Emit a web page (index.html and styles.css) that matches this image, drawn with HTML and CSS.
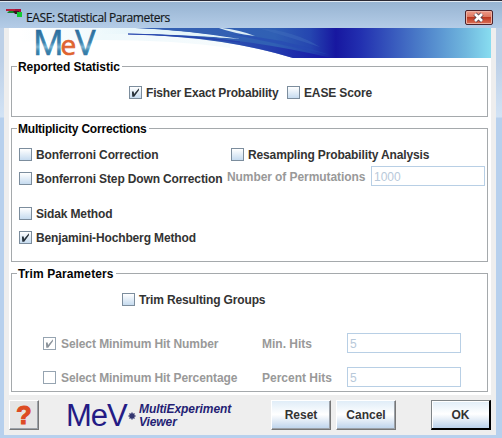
FILE: index.html
```html
<!DOCTYPE html>
<html lang="en">
<head>
<meta charset="utf-8">
<title>EASE: Statistical Parameters</title>
<link rel="stylesheet" href="styles.css">
</head>
<body>
<div class="window">
  <header class="titlebar">
    <svg class="app-icon" width="17" height="9" viewBox="0 0 17 9"><path d="M0 1h9v2H0z" fill="#b5203c"/><path d="M3 3h8v2H1z" fill="#16852c"/><path d="M9 1h6v3H9z" fill="#a3123c"/><path d="M7 3h6v3H9z" fill="#351a20"/><path d="M11 4h5v5h-5z" fill="#15c934"/></svg>
    <h1 class="title">EASE: Statistical Parameters</h1>
    <button class="close" aria-label="Close"><svg width="28" height="15" viewBox="0 0 28 15"><path d="M10 4l7 7M17 4l-7 7" stroke="#5b4650" stroke-width="4.4"/><path d="M10 4l7 7M17 4l-7 7" stroke="#fff" stroke-width="2.6"/></svg></button>
  </header>
  <main class="content">
    <div class="sheet">
      <svg class="banner" width="482" height="31" viewBox="9 28 482 31">
        <defs>
          <linearGradient id="sky" gradientUnits="userSpaceOnUse" x1="130" y1="0" x2="491" y2="0">
            <stop offset="0" stop-color="#4a6cb8"/><stop offset=".15" stop-color="#3460b2"/><stop offset=".4" stop-color="#3060b4"/><stop offset=".5" stop-color="#2545b0"/><stop offset=".57" stop-color="#1717a0"/><stop offset=".64" stop-color="#2230b0"/><stop offset=".8" stop-color="#4a7bc8"/><stop offset=".93" stop-color="#70b7de"/><stop offset="1" stop-color="#88ddf0"/>
          </linearGradient>
          <linearGradient id="letters" gradientUnits="userSpaceOnUse" x1="0" y1="30" x2="0" y2="55"><stop offset="0" stop-color="#2a6c9c"/><stop offset=".5" stop-color="#3c82ad"/><stop offset=".68" stop-color="#7ab3d0"/><stop offset=".84" stop-color="#3a82ac"/><stop offset="1" stop-color="#3479a5"/></linearGradient>
          <linearGradient id="haze" x1="0" y1="0" x2="1" y2="0"><stop offset="0" stop-color="#e8f6fb" stop-opacity="0"/><stop offset=".2" stop-color="#e8f6fb"/><stop offset="1" stop-color="#e2f3f8"/></linearGradient>
          <linearGradient id="deep" x1="0" y1="0" x2="1" y2="0"><stop offset="0" stop-color="#2745ad" stop-opacity="0"/><stop offset="1" stop-color="#1717a8"/></linearGradient>
          <linearGradient id="mist" x1="0" y1="0" x2="1" y2="0"><stop offset="0" stop-color="#fff"/><stop offset=".4" stop-color="#eff9fc"/><stop offset="1" stop-color="#f6fbfd"/></linearGradient>
        </defs>
        <path d="M9 28h482v31H9z" fill="#fff"/>
        <path d="M20 28h210v20Q150 36 20 42z" fill="url(#mist)"/>
        <path d="M135 28H491V58H293Q225 37 128 34Q170 33 228 38Q185 31 135 28z" fill="url(#sky)"/>
        <path d="M100 28H135Q185 30 240 39Q180 34 128 34H100z" fill="url(#haze)"/>
        <path d="M135 28H195Q212 33 232 37Q185 30 135 28z" fill="#3460b2"/>
        <path d="M128 34Q180 35 240 42Q190 35 128 34z" fill="#2745ad" stroke="#2745ad" stroke-width=".8"/>
        <path d="M222 28Q240 30 255 36Q232 33 219 28z" fill="#dcedf5"/>
        <path d="M175 36Q245 38 332 58H293Q240 42 175 36z" fill="url(#deep)"/>
        <path d="M230 34Q280 37 330 55Q270 42 230 34z" fill="#2748b2" opacity=".6"/>
        <path d="M258 28Q295 31 320 47Q292 38 258 28z" fill="#4470be" opacity=".4"/>
        <text class="logo" x="33" y="55">M<tspan class="e" dx="-3">e</tspan><tspan dx="-1">V</tspan></text>
      </svg>

      <fieldset class="group reported">
        <legend>Reported Statistic</legend>
        <div class="row">
          <span class="box checked"></span><span class="label fisher">Fisher Exact Probability</span>
          <span class="box"></span><span class="label ease">EASE Score</span>
        </div>
      </fieldset>

      <fieldset class="group multiplicity">
        <legend>Multiplicity Corrections</legend>
        <div class="row">
          <span class="box"></span><span class="label first">Bonferroni Correction</span>
          <span class="box"></span><span class="label">Resampling Probability Analysis</span>
        </div>
        <div class="row step">
          <span class="box"></span><span class="label stepdown">Bonferroni Step Down Correction</span>
          <span class="dim perm">Number of Permutations</span><span class="field">1000</span>
        </div>
        <div class="row sidak"><span class="box"></span><span class="label">Sidak Method</span></div>
        <div class="row benjamini"><span class="box checked"></span><span class="label">Benjamini-Hochberg Method</span></div>
      </fieldset>

      <fieldset class="group trim">
        <legend>Trim Parameters</legend>
        <div class="row resulting"><span class="box"></span><span class="label">Trim Resulting Groups</span></div>
        <div class="row hits"><span class="box off checked"></span><span class="dim choice">Select Minimum Hit Number</span><span class="dim name">Min. Hits</span><span class="field">5</span></div>
        <div class="row hits percent"><span class="box off"></span><span class="dim choice">Select Minimum Hit Percentage</span><span class="dim name">Percent Hits</span><span class="field">5</span></div>
      </fieldset>
    </div>
    <footer class="footer">
      <button class="btn help">?</button>
      <span class="mev">MeV</span>
      <svg class="star" width="8" height="8" viewBox="0 0 8 8"><path d="M4 .5v7M.5 4h7M1.5 1.5l5 5M6.5 1.5l-5 5" stroke="#34366f" stroke-width="1.4"/><circle cx="4" cy="4" r="2.4" fill="#34366f"/></svg>
      <span class="tagline">MultiExperiment<br>Viewer</span>
      <button class="btn">Reset</button>
      <button class="btn cancel">Cancel</button>
      <button class="btn ok">OK</button>
    </footer>
  </main>
</div>
</body>
</html>
```
FILE: styles.css
```css
* { box-sizing: border-box; }
body { margin: 0; font: bold 12px/14px "Liberation Sans", Arial, sans-serif; color: #333; }
.window { width: 502px; height: 438px; overflow: hidden; border-top: 1px solid #292833; background: linear-gradient(#bdd0e7 0 60px, #d2e3f5 116px, #b7d0ed 117px); }
.titlebar { display: flex; height: 27px; padding: 0 9px 0 6px; border-top: 1px solid #e1e9f1; background: linear-gradient(#97b4d2, #b4cce7); }
.app-icon { margin-top: 6px; }
.title { margin: 7px 0 0 3px; font: normal 12px/17px "Open Sans", "Noto Sans", sans-serif; color: #151920; letter-spacing: -.4px; white-space: nowrap; -webkit-text-stroke: .2px; }
.close { display: flex; width: 28px; height: 15px; margin: 8px 0 0 auto; padding: 0; border: 1px solid #4b222b; border-radius: 2px; background: linear-gradient(#ef9a88, #db765f 48%, #bd3921 50%, #dc7058); box-shadow: inset 0 0 0 1px #ecb0a2; }
.close svg { margin: -1px; }
.content { width: 492px; height: 407px; margin-left: 4px; padding: 0 5px; background: #eee; }
.sheet { height: 367px; background: #fff; }
.banner { display: block; overflow: visible; }
.logo { font: normal 34px "Open Sans", "Noto Sans", sans-serif; fill: url(#letters); stroke: url(#letters); stroke-width: .7px; }
.e { font-size: 28px; fill: #df6431; stroke: #df6431; }
.group { width: 477px; margin: 0 0 0 2px; padding: 0; border: 1px solid #a5a9ac; }
legend { height: 13px; margin-left: 5px; padding: 0 2px 0 1px; color: #050505; line-height: 15px; }
.reported legend { letter-spacing: -.05px; }
.multiplicity legend { letter-spacing: -.2px; }
.trim legend { letter-spacing: .1px; }
.row { display: flex; align-items: center; height: 19px; white-space: nowrap; }
.box { flex: none; width: 13px; height: 13px; border: 1px solid #7c8d9d; background: linear-gradient(#fff, #c6dbef); }
.checked::after { content: ""; display: block; width: 9px; height: 9px; margin: 1px; background: #27313a; clip-path: polygon(10% 40%, 30% 40%, 34% 66%, 88% 4%, 88% 26%, 36% 96%, 14% 96%); }
.off { background: #fff; border-color: #96a4b1; }
.off.checked::after { background: #8b939b; }
.label { margin-left: 4px; letter-spacing: -.14px; }
.dim { color: #999; letter-spacing: -.08px; }
.field { align-self: flex-start; width: 114px; height: 20px; margin-top: -1px; padding: 3px 2px; border: 1px solid #b8cfe5; font-weight: normal; color: #b8c9da; line-height: 14px; }
.reported { height: 57px; margin-top: 1px; }
.reported .row { margin: 10px 0 0 117px; }
.fisher { width: 141px; letter-spacing: -.18px; }
.multiplicity { height: 140px; margin-top: 5px; }
.multiplicity .row { margin: 10px 0 0 7px; }
.first { width: 195px; }
.multiplicity .step { margin-top: 5px; }
.stepdown { width: 191px; }
.perm { width: 144px; margin-top: -4px; }
.step .field { margin-top: -3px; }
.multiplicity .sidak { margin-top: 16px; }
.multiplicity .benjamini { margin-top: 5px; }
.trim { height: 125px; margin-top: 5px; }
.trim .resulting { margin: 10px 0 0 110px; }
.trim .hits { margin: 25px 0 0 31px; }
.trim .percent { margin-top: 15px; }
.choice { width: 201px; margin-left: 5px; }
.name { width: 85px; letter-spacing: 0; }
.footer { display: flex; align-items: flex-start; height: 40px; padding-top: 5px; }
.btn { width: 60px; height: 30px; padding: 0; border: 1px solid; border-color: #fff #777 #777 #fff; box-shadow: inset -1px -1px #9ba1a8; background: linear-gradient(#e0edf8, #fff 48%, #bbd2eb); color: #333; font: inherit; }
.help { width: 30px; background: #e5e5e5; color: #dd4c23; font: 900 25px/27px "Liberation Sans", Arial, sans-serif; -webkit-text-stroke: 1.2px #dd4c23; }
.mev { width: 62px; margin: 0 0 0 27px; color: #241b85; font: normal 31px/31px "Liberation Sans", Arial, sans-serif; letter-spacing: -1px; }
.star { margin: 12px 0 0 0; }
.tagline { width: 132px; margin: 3px 0 0 3px; color: #241e74; font-size: 12px; font-style: italic; line-height: 13px; letter-spacing: -.08px; }
.cancel { margin-left: 5px; }
.ok { margin-left: 35px; border: 1px solid #7f8487; border-right: 2px solid #000; border-bottom: 2px solid #000; box-shadow: inset 1px 1px #fff; }
```
